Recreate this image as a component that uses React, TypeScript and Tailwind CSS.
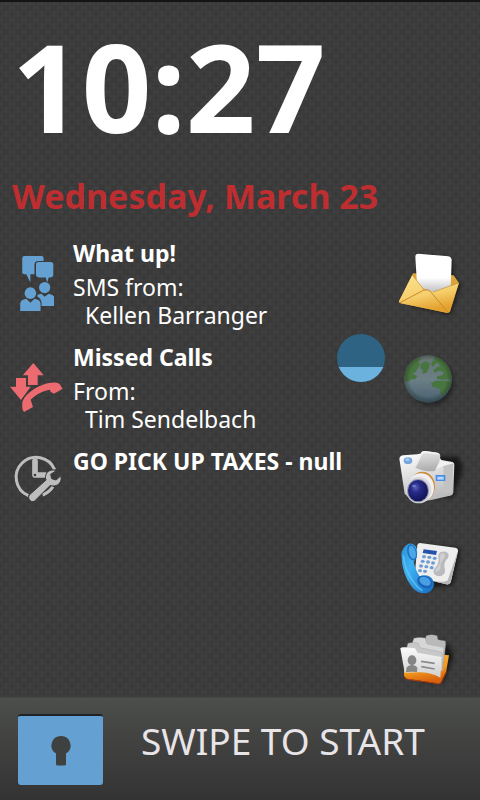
import React from 'react';

const TILE =
  "bg-[radial-gradient(circle_at_center,#00000024_0%,#00000000_70%),radial-gradient(circle_at_center,#00000024_0%,#00000000_70%),radial-gradient(circle_at_center,#ffffff0a_0%,#00000000_70%)] bg-[length:12px_12px,12px_12px,4px_4px] bg-[position:0_0,6px_6px,0_0]";

const SmsIcon: React.FC = () => (
  <svg viewBox="21 22 33 54" className="w-[34px] h-[55px]" fill="#64a0d2" aria-hidden="true">
    <path d="M25 22h17q2 0 2 3v2h-5q-4 0-4 4v9h-4v8l-4-8h-2q-2 0-2-2V25q0-3 2-3z" />
    <path d="M39 28h12q2.500 0 2.500 2.500V40q0 3-2.500 3h-2l-1.500 5-1.500-5h-7q-2.500 0-2.500-3v-9.500Q36.500 28 39 28z" />
    <circle cx="45" cy="53" r="5.500" />
    <path d="M38 60q3-1 4-1l3 3 4-3q6 1 6 5v7H42v-3q-1-5-4-6z" />
    <circle cx="31" cy="58.500" r="5.700" />
    <path d="M21 76v-7q0-4 6-5l4 4 4-4q6 1 6 5v7z" />
  </svg>
);

const MissedCallIcon: React.FC = () => (
  <svg viewBox="27 51 159 147" className="w-[53px] h-[49px]" fill="#ec6b70" aria-hidden="true">
    <path d="M97 51l31 37h-18v29H81V88H65z" />
    <path d="M45 96h30v26h14l-29 40-33-40h18z" />
    <path d="M64 176c-2-22 30-48 60-59 26-10 46-9 52-3l9 14-26 15c-9-4-12-7-12-12-20 2-44 15-58 30l7 22-27 15c-5-6-6-14-5-22z" />
  </svg>
);

const ReminderIcon: React.FC = () => (
  <svg viewBox="40 38 147 147" className="w-[49px] h-[49px]" aria-hidden="true">
    <path d="M89 166A60 60 0 1 1 168 88M132 164q20-8 31-25" fill="none" stroke="#bdbdbd" strokeWidth="9" />
    <path d="M109 62v42h30" fill="none" stroke="#bdbdbd" strokeWidth="17" strokeLinecap="round" strokeLinejoin="round" />
    <circle cx="109" cy="104" r="4" fill="#3b3b3b" />
    <path
      d="M173 91c-9-4-22-2-28 6-5 7-6 15-3 22l-50 45c-7 9 4 24 15 19l48-48c9 4 20 2 27-6 6-7 7-15 4-22l-14 12-13-4-3-13z"
      fill="#bdbdbd"
      stroke="#3b3b3b"
      strokeWidth="3"
    />
  </svg>
);

const MailIcon: React.FC = () => (
  <svg viewBox="195 -3 270 273" className="w-full h-full" aria-hidden="true">
    <defs>
      <linearGradient id="envelope" x1="0" y1="0" x2="0.300" y2="1">
        <stop offset="0" stopColor="#fde28f" />
        <stop offset="0.600" stopColor="#f6cf6c" />
        <stop offset="1" stopColor="#e3a02e" />
      </linearGradient>
      <linearGradient id="letter" x1="0" y1="0" x2="0" y2="1">
        <stop offset="0.600" stopColor="#ffffff" />
        <stop offset="1" stopColor="#b9b9bd" />
      </linearGradient>
      <filter id="soft" x="-30%" y="-30%" width="160%" height="160%">
        <feGaussianBlur stdDeviation="7" />
      </filter>
    </defs>
    <path d="M285 48l98 10 4 56 21 22-30 88-120-26z" fill="#000" opacity="0.500" filter="url(#soft)" />
    <path d="M264 100l122 6 16 23-27 86q-4 4-10 3l-137-28q-6-1-5-7z" fill="#dba53c" />
    <path d="M280 41l90 8q9 2 10 11l-3 85-56 16-45-28-5-83q0-9 9-9z" fill="url(#letter)" />
    <path d="M262 105l35 45q9 3 16 1 5 5 12 5l76-26-27 85q-4 4-10 3l-137-28q-6-1-5-7z" fill="url(#envelope)" />
    <path d="M225 188l72-38q9-3 18 3l53 63" fill="none" stroke="#c78b2c" strokeWidth="3" />
    <path d="M262 105l35 44M325 156l74-27" fill="none" stroke="#c99235" strokeWidth="2" />
  </svg>
);

const GlobeIcon: React.FC = () => (
  <svg viewBox="195 270 270 273" className="w-full h-full" aria-hidden="true">
    <defs>
      <linearGradient id="ocean" x1="0" y1="0" x2="0" y2="1">
        <stop offset="0" stopColor="#66736f" />
        <stop offset="0.500" stopColor="#6c7f86" />
        <stop offset="1" stopColor="#46606f" />
      </linearGradient>
      <radialGradient id="shade" cx="0.500" cy="0.480" r="0.520">
        <stop offset="0.750" stopColor="#000" stopOpacity="0" />
        <stop offset="1" stopColor="#182a20" stopOpacity="0.400" />
      </radialGradient>
      <clipPath id="disc"><circle cx="309" cy="417" r="71" /></clipPath>
    </defs>
    <circle cx="318" cy="428" r="70" fill="#000" opacity="0.350" filter="url(#soft)" />
    <circle cx="309" cy="417" r="71" fill="url(#ocean)" />
    <g clipPath="url(#disc)" fill="#48753f">
      <path d="M236 420v-38l22-24 30-4-8 12 6 6-8 14-6 10-10 6 16 6-8 10-12 0-8 8z" />
      <path d="M288 370l14-6 12 6-2 14-8 14-12 4 2-10-8-8z" />
      <path d="M326 350l26-2 34 44-2 28-18-2-14 2-18-4 4-8 14-2 4-10-14-4-12 6-6-6 12-10 8-2-4-12-10 4-6 8-6-6 4-10 8-4z" />
      <path d="M318 430l14-8 40 0 10 8-16 24-12 12-8-4-2-16-22-6z" />
    </g>
    <circle cx="309" cy="417" r="71" fill="url(#shade)" />
  </svg>
);

const CameraIcon: React.FC = () => (
  <svg viewBox="0 -57 270 273" className="w-full h-full" aria-hidden="true">
    <defs>
      <linearGradient id="body" x1="0" y1="0" x2="0.300" y2="1">
        <stop offset="0" stopColor="#ffffff" />
        <stop offset="0.500" stopColor="#dedede" />
        <stop offset="1" stopColor="#bcbcbc" />
      </linearGradient>
      <linearGradient id="prism" x1="0.300" y1="0" x2="0.400" y2="1">
        <stop offset="0" stopColor="#e4e4e4" />
        <stop offset="0.500" stopColor="#c9c9c9" />
        <stop offset="1" stopColor="#ababab" />
      </linearGradient>
      <radialGradient id="lens" cx="0.380" cy="0.350" r="0.700">
        <stop offset="0" stopColor="#5560b8" />
        <stop offset="0.350" stopColor="#262a86" />
        <stop offset="1" stopColor="#0f1152" />
      </radialGradient>
    </defs>
    <path d="M110 50l95 0 14 35-28 85-90 5z" fill="#000" opacity="0.600" filter="url(#soft)" />
    <path d="M28 56q2-9 12-10l42-3 18-4 44 6 10 15 34 6q6 2 5 10l-3 82q-2 8-10 9l-60 14-50 4-26-24z" fill="url(#body)" />
    <path d="M160 78l30-8-4 82q-2 6-10 8l-14 3z" fill="#c2c2c2" />
    <path d="M150 61l40 8-30 9-22 9z" fill="#f1f1f1" />
    <path d="M94 37q4-4 12-4l36 5q8 2 9 9l-3 18-14 28q-26 4-58-10z" fill="url(#prism)" />
    <path d="M94 37q4-4 12-4l36 5q6 1 8 6l-44-5q-8 0-12 9l-14 30-4 5z" fill="#f3f3f3" />
    <ellipse cx="54" cy="62" rx="13" ry="10" fill="#76a6dc" />
    <ellipse cx="52" cy="59" rx="6" ry="4" fill="#a9cdf3" />
    <path d="M137 105h29v18h-29z" fill="#4b8be0" />
    <path d="M142 110h19v9h-19z" fill="#b4d8fa" />
    <ellipse cx="97" cy="139" rx="38" ry="44" fill="#d08a3c" />
    <ellipse cx="93" cy="143" rx="39" ry="43" fill="#f0f0f2" />
    <ellipse cx="86" cy="150" rx="38" ry="40" fill="#d8d8de" />
    <ellipse cx="84" cy="152" rx="33" ry="35" fill="#9999a8" />
    <ellipse cx="84" cy="152" rx="30" ry="32" fill="url(#lens)" />
    <ellipse cx="72" cy="138" rx="6" ry="4" fill="#98a4e8" opacity="0.500" />
  </svg>
);

const PHONE_KEYS = [
  [102, 80], [118, 82], [134, 85],
  [98, 94], [114, 96], [129, 99],
  [93, 108], [109, 110], [125, 113],
  [90, 122], [105, 124],
];

const PhoneIcon: React.FC = () => (
  <svg viewBox="0 -54 270 273" className="w-full h-full" aria-hidden="true">
    <defs>
      <linearGradient id="handset" x1="0" y1="0" x2="1" y2="0.700">
        <stop offset="0" stopColor="#2a8fd6" />
        <stop offset="0.400" stopColor="#3eb2f2" />
        <stop offset="1" stopColor="#1c76c8" />
      </linearGradient>
    </defs>
    <path d="M90 45l115 8 6 16-22 96-80 10z" fill="#000" opacity="0.550" filter="url(#soft)" />
    <path d="M90 39l106 14q9 2 8 11l-22 93q-3 8-13 6L74 140l8-94q2-7 8-7z" fill="#eeeeee" />
    <path d="M204 62l-22 95q-3 8-13 6l-40-9q38 4 44-3z" fill="#b5b5b8" />
    <path d="M101 58l40 5-3 12-40-6z" fill="#2454aa" />
    <path d="M152 66q15-5 23 5 3 10-6 18-8 10-5 24 3 14-3 20-14 12-29-2-5-10 6-20 11-14 7-29-1-11 7-16z" fill="#b9babd" />
    <path d="M153 71q9-3 12 3 0 9-7 16-9 13-6 25-8 13-16 10 0-9 8-15 10-18 5-27-1-8 4-12z" fill="#cfd0d2" />
    {PHONE_KEYS.map(([x, y]) => (
      <ellipse key={`${x}-${y}`} cx={x} cy={y} rx="6" ry="5" fill="#6d9cd4" />
    ))}
    <path
      d="M34 72q4-22 22-31 17-2 24 14 5 21-5 35l-4 6q6 26 18 43 24-8 36 6 10 12 5 27-8 18-28 18-20 0-36-19Q35 132 34 72z"
      fill="url(#handset)"
    />
    <path d="M40 76q4 46 32 82 10 16 25 24" fill="none" stroke="#6fd0ff" strokeWidth="5" opacity="0.600" />
    <ellipse cx="66" cy="67" rx="14" ry="25" fill="#1e6fc0" transform="rotate(-14 66 67)" />
    <ellipse cx="67" cy="67" rx="10" ry="20" fill="#4ba6e8" transform="rotate(-14 67 67)" />
    <ellipse cx="104" cy="156" rx="24" ry="17" fill="#1a62b6" transform="rotate(28 104 156)" />
    <ellipse cx="105" cy="154" rx="18" ry="12" fill="#489fe4" transform="rotate(28 105 154)" />
  </svg>
);

const ContactsIcon: React.FC = () => (
  <svg viewBox="0 -51 270 273" className="w-full h-full" aria-hidden="true">
    <defs>
      <linearGradient id="tray" x1="0" y1="0" x2="0.300" y2="1">
        <stop offset="0" stopColor="#f8b23a" />
        <stop offset="0.600" stopColor="#f09a1e" />
        <stop offset="1" stopColor="#d8620f" />
      </linearGradient>
      <linearGradient id="sheet" x1="0" y1="0" x2="0" y2="1">
        <stop offset="0" stopColor="#fafafa" />
        <stop offset="1" stopColor="#cfcfcf" />
      </linearGradient>
    </defs>
    <path d="M120 50l60 30 10 30-28 75-70 0z" fill="#000" opacity="0.600" filter="url(#soft)" />
    <path d="M42 130l120-26 15 2-8 46-17 36q-3 3-10 2l-92-14q-8-2-8-10z" fill="url(#tray)" />
    <path d="M43 168q2 9 10 10l92 13q6 0 9-4l16-33" fill="none" stroke="#b83c0c" strokeWidth="3" />
    <path d="M92 60l14-4 3-9q14-5 32 0l3 12 22 4 1 10-6 55-54 5z" fill="#b9b9b9" stroke="#8d8d8d" strokeWidth="1" />
    <path d="M68 66l4-11q14-4 33-1l6 18 50 10-3 60-50 5-43-40z" fill="#d6d6d6" stroke="#949494" strokeWidth="1" />
    <path d="M50 84l4-14q16-4 30-1l6 14 66 14 2 56-60-10z" fill="#c8c8c8" stroke="#8f8f8f" strokeWidth="1" />
    <path d="M31 85q3-4 14-3l30 3 8 13 72 13-4 62q-22-14-60-16-28 0-47 1z" fill="url(#sheet)" />
    <ellipse cx="66" cy="121" rx="13" ry="15" fill="#858585" />
    <path d="M48 156l2-14q8-8 18-7 12 2 14 9l-1 12q-18-1-33 0z" fill="#858585" />
    <path d="M93 124l41 6M94 140l40 7" stroke="#8b8b8b" strokeWidth="5" />
  </svg>
);

interface Notice {
  icon: React.ReactNode;
  title: string;
  label?: string;
  from?: string;
}

const notices: Notice[] = [
  { icon: <SmsIcon />, title: 'What up!', label: 'SMS from:', from: 'Kellen Barranger' },
  { icon: <MissedCallIcon />, title: 'Missed Calls', label: 'From:', from: 'Tim Sendelbach' },
  { icon: <ReminderIcon />, title: 'GO PICK UP TAXES - null' },
];

const shortcuts = [
  { name: 'Mail', icon: <MailIcon /> },
  { name: 'Browser', icon: <GlobeIcon /> },
  { name: 'Camera', icon: <CameraIcon /> },
  { name: 'Phone', icon: <PhoneIcon /> },
  { name: 'Contacts', icon: <ContactsIcon /> },
];

const App: React.FC = () => {
  return (
    <div className={`min-h-screen flex flex-col bg-[#3d3e3d] border-t-2 border-[#141414] font-['Noto_Sans',sans-serif] text-white ${TILE}`}>

      {/* Clock */}
      <header className="px-3 pt-5">
        <h1 className="text-[122px] leading-[128px] font-bold">10:27</h1>
        <p className="mt-[26px] text-[34px] leading-10 font-bold text-[#be2e30] whitespace-nowrap">Wednesday, March 23</p>
      </header>

      <main className="relative flex-1 flex pt-[23px]">
        {/* Notifications */}
        <ul className="flex-1 min-w-0 flex flex-col gap-[14px]">
          {notices.map((notice) => (
            <li key={notice.title} className="flex items-start">
              <div className={`w-[73px] shrink-0 flex items-center justify-center ${notice.from ? 'h-[88px]' : 'h-[60px]'}`}>
                {notice.icon}
              </div>
              <div className="text-[23px] leading-7 whitespace-nowrap">
                <h2 className="font-bold">{notice.title}</h2>
                {notice.label && <p className="mt-[6px]">{notice.label}</p>}
                {notice.from && <p className="pl-3">{notice.from}</p>}
              </div>
            </li>
          ))}
        </ul>

        {/* Shortcuts */}
        <nav className="w-[90px] shrink-0 flex flex-col">
          {shortcuts.map((item) => (
            <button key={item.name} type="button" aria-label={item.name} className="h-[91px]">
              {item.icon}
            </button>
          ))}
        </nav>

        {/* Drag handle floating over the list */}
        <div className="absolute right-[95px] top-[118px] size-12 rounded-full overflow-hidden bg-[#2e6383]">
          <div className="mt-[33px] h-4 bg-[#6cb2de]" />
        </div>
      </main>

      {/* Unlock bar */}
      <footer className="h-[103px] flex items-start gap-[38px] px-[18px] pt-4 bg-linear-to-b from-[#4c4e4b] to-[#333333] border-t border-[#454745]">
        <button type="button" aria-label="Unlock" className="w-[85px] h-[71px] rounded-[3px] bg-[#64a0d2] border-t-2 border-[#1d2326] flex items-center justify-center">
          <svg viewBox="0 0 20 30" className="w-5 h-[30px]" fill="#3f4140" aria-hidden="true">
            <path d="M10 0a9.500 9.500 0 0 1 5 17.600V28q0 1.500-1.500 1.500h-7Q5 29.500 5 28V17.600A9.500 9.500 0 0 1 10 0z" />
          </svg>
        </button>
        <span className="text-[37px] leading-[54px] text-[#e8e4e8] whitespace-nowrap">SWIPE TO START</span>
      </footer>
    </div>
  );
};

export default App;
